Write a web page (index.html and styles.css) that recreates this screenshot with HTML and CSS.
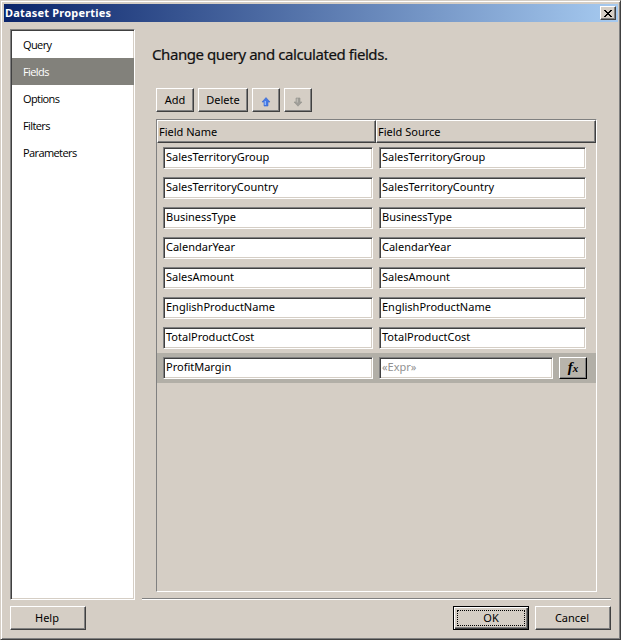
FILE: index.html
```html
<!DOCTYPE html>
<html lang="en">
<head>
<meta charset="utf-8">
<title>Dataset Properties</title>
<link rel="stylesheet" href="styles.css">
</head>
<body>
<div class="window">
  <header class="titlebar">
    <span class="title">Dataset Properties</span>
    <button class="close" aria-label="Close"><svg width="8" height="7" viewBox="0 0 8 7" shape-rendering="crispEdges"><path d="M0 0h2v1h1v1h2V1h1V0h2v1H7v1H6v1H5v1h1v1h1v1h1v1H6V6H5V5H3v1H2v1H0V6h1V5h1V4h1V3H2V2H1V1H0z"/></svg></button>
  </header>
  <div class="body">
    <nav class="pages">
      <div class="page">Query</div>
      <div class="page selected">Fields</div>
      <div class="page">Options</div>
      <div class="page">Filters</div>
      <div class="page">Parameters</div>
    </nav>
    <main class="content">
      <h1>Change query and calculated fields.</h1>
      <div class="toolbar">
        <button class="btn add">Add</button>
        <button class="btn delete">Delete</button>
        <button class="btn arrow" aria-label="Move up"><svg width="10" height="10" viewBox="0 0 10 10"><path d="M5 .6 9 5H7v4H3V5H1z" fill="#4478e4" stroke="#3c68cc" stroke-width=".6"/><path d="M3.6 4h1.4v4H3.6z" fill="#8fb8ff"/></svg></button>
        <button class="btn arrow" aria-label="Move down"><svg width="10" height="10" viewBox="0 0 10 10"><path d="M3 1h4v4h2L5 9.2 1 5h2z" fill="#9f9d98" stroke="#96948f" stroke-width=".6"/><path d="M3.6 1.6H5v4H3.6z" fill="#bebbb4"/></svg></button>
      </div>
      <section class="grid">
        <div class="head"><div class="th">Field Name</div><div class="th">Field Source</div></div>
        <div class="row"><div class="field">SalesTerritoryGroup</div><div class="field">SalesTerritoryGroup</div></div>
        <div class="row"><div class="field">SalesTerritoryCountry</div><div class="field">SalesTerritoryCountry</div></div>
        <div class="row"><div class="field">BusinessType</div><div class="field">BusinessType</div></div>
        <div class="row"><div class="field">CalendarYear</div><div class="field">CalendarYear</div></div>
        <div class="row"><div class="field">SalesAmount</div><div class="field">SalesAmount</div></div>
        <div class="row"><div class="field">EnglishProductName</div><div class="field">EnglishProductName</div></div>
        <div class="row"><div class="field">TotalProductCost</div><div class="field">TotalProductCost</div></div>
        <div class="row current"><div class="field">ProfitMargin</div><div class="field expr">«Expr»</div><button class="fx">f<span>x</span></button></div>
      </section>
      <div class="rule"></div>
    </main>
  </div>
  <footer class="footer">
    <button class="btn wide">Help</button>
    <button class="btn wide ok"><span class="focus">OK</span></button>
    <button class="btn wide">Cancel</button>
  </footer>
</div>
</body>
</html>
```
FILE: styles.css
```css
* { box-sizing: border-box; }
body { margin: 0; font: 11px/14px "Noto Sans", sans-serif; color: #000; }
button { font: inherit; color: inherit; padding: 0; margin: 0; border-radius: 0; }
svg { display: block; }

.window {
  width: 621px; height: 640px; padding: 2px 2px 0 2px;
  background: #d5cec5;
  border: 1px solid #d5cec5; border-right-color: #404040; border-bottom-color: #404040;
  box-shadow: inset 1px 1px #fff, inset -1px -1px #808080;
  display: flex; flex-direction: column;
}
.titlebar {
  height: 18px; margin: 1px 0 0 1px; padding: 0 2px 0 1px;
  display: flex; align-items: center; justify-content: space-between;
  background: linear-gradient(90deg, #0a246a, #a6caf0);
  color: #fff;
}
.title { font-weight: 700; font-size: 11px; letter-spacing: .2px; }
.close {
  width: 16px; height: 14px; background: #d5cec5;
  border: 1px solid; border-color: #fff #404040 #404040 #fff;
  box-shadow: inset -1px -1px #808080;
  display: flex; align-items: center; justify-content: center;
}
.body { display: flex; height: 579px; padding: 7px 0 0 7px; }
.pages {
  width: 125px; height: 571px; background: #fff;
  border: 1px solid; border-color: #808080 #fff #fff #808080;
  box-shadow: inset 1px 1px #404040, inset -1px -1px #d5cec5;
  padding: 1px 0 0 1px;
}
.page { height: 27px; line-height: 27px; padding-left: 11px; font-family: "Open Sans", sans-serif; letter-spacing: -.6px; }
.page.selected { background: #82817b; color: #fff; }

.content { width: 469px; margin-left: 7px; display: flex; flex-direction: column; }
h1 { margin: 14px 0 0 10px; height: 22px; font-size: 15px; line-height: 22px; font-weight: 400; color: #111; white-space: nowrap; letter-spacing: -.43px; -webkit-text-stroke: .2px #111; }
.toolbar { display: flex; gap: 4px; margin: 23px 0 0 14px; }
.btn {
  height: 24px; background: #d5cec5;
  border: 1px solid; border-color: #fff #404040 #404040 #fff;
  box-shadow: inset -1px -1px #808080;
  display: flex; align-items: center; justify-content: center;
}
.add { width: 38px; }
.delete { width: 50px; }
.arrow { width: 28px; padding-top: 4px; }

.grid {
  width: 441px; height: 473px; margin: 7px 0 0 14px;
  border: 1px solid; border-color: #808080 #fff #fff #808080;
}
.head { display: flex; height: 23px; }
.th {
  width: 219px; height: 23px; line-height: 21px; padding-left: 1px;
  border: 1px solid; border-color: #fff #404040 #404040 #fff;
  box-shadow: inset -1px -1px #808080;
}
.th + .th { width: 220px; }
.row { height: 30px; display: flex; gap: 6px; padding: 4px 0 0 6px; }
.row.current { background: #b2afa7; }
.field {
  width: 210px; height: 22px; background: #fff; line-height: 18px; padding-left: 2px;
  border: 1px solid; border-color: #808080 #fff #fff #808080;
  box-shadow: inset 1px 1px #404040, inset -1px -1px #d5cec5;
}
.field + .field { width: 207px; }
.field + .field.expr { width: 174px; color: #919191; }
.fx {
  width: 28px; height: 22px; background: #b8b4ab;
  border: 1px solid; border-color: #fff #000 #000 #fff;
  box-shadow: inset -1px -1px #808080;
  font: italic 700 15px/15px "Liberation Serif", serif;
}
.fx span { font-size: 11px; }
.rule { height: 2px; margin-top: 6px; border-top: 1px solid #808080; border-bottom: 1px solid #fff; }

.footer { display: flex; gap: 6px; padding: 5px 0 0 7px; }
.wide { width: 76px; padding-right: 2px; }
.ok { margin-left: auto; padding: 0; border-color: #000; box-shadow: inset 1px 1px #fff, inset -1px -1px #404040, inset -2px -2px #808080; }
.wide:last-child { margin-right: 7px; }
.focus { width: 68px; height: 16px; border: 1px dotted #000; line-height: 14px; }
```
